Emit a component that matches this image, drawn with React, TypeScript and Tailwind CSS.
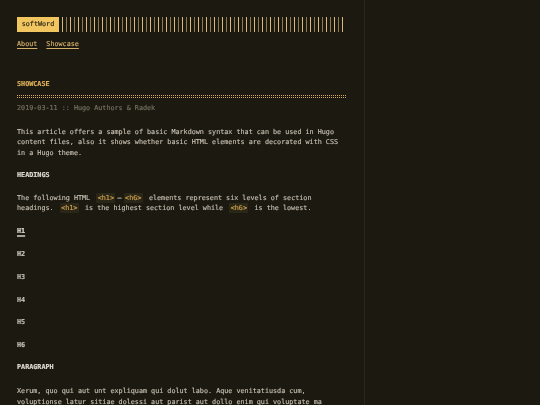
import React from "react";

const mono = { fontFamily: '"DejaVu Sans Mono", "Liberation Mono", monospace' };

function Code({ children }: { children: React.ReactNode }) {
  return (
    <code className="mx-[2px] rounded-[1px] bg-[#2b2718] px-[1.5px] py-[1px] text-[#cfa24c]" style={mono}>
      {children}
    </code>
  );
}

export default function App() {
  const bars = Array.from({ length: 71 });
  return (
    <div className="flex min-h-screen bg-[#1c1911] text-[6.75px] leading-[10.5px] text-[#c6bfb1] opacity-[0.999] will-change-transform [-webkit-text-stroke-width:0.15px]" style={mono}>
      <div className="w-[365px] shrink-0 border-r border-[#2a261c] px-[17px] pt-[17px] pb-[20px]">
        <header className="flex h-[15px] items-stretch">
          <div className="flex w-[42px] items-center justify-center bg-[#f1c660] text-[#2a2312]">softWord</div>
          <div className="ml-[3px] flex items-stretch gap-[3px]">
            {bars.map((_, i) => (
              <div key={i} className={i % 2 === 0 ? "w-[1px] bg-[#d6bb78]" : "w-[1px] bg-[#8f7c4e]"} />
            ))}
          </div>
        </header>
        <nav className="mt-[7px] flex gap-[9px] text-[#d3b06a]">
          <a className="underline underline-offset-[1.5px]">About</a>
          <a className="underline underline-offset-[1.5px]">Showcase</a>
        </nav>
        <main className="w-[330px]">
          <h1 className="mt-[29.5px] font-bold text-[#e3b45a]">SHOWCASE</h1>
          <div
            className="mt-[5.5px] h-[3px] w-[330px]"
            style={{
              backgroundImage:
                "repeating-linear-gradient(90deg, #d2a853 0 1px, transparent 1px 2px)",
              WebkitMaskImage:
                "linear-gradient(180deg, #000 0 1px, transparent 1px 2px, #000 2px 3px)",
            }}
          />
          <div className="mt-[4.75px] text-[#787162]">2019-03-11 :: Hugo Authors &amp; Radek</div>
          <p className="mt-[13.5px]">
            This article offers a sample of basic Markdown syntax that can be used in Hugo content files, also it shows whether basic HTML elements are decorated with CSS in a Hugo theme.
          </p>
          <h2 className="mt-[11.5px] font-bold text-[#e0dbd1]">HEADINGS</h2>
          <p className="mt-[12.5px]">
            The following HTML <Code>&lt;h1&gt;</Code>—<Code>&lt;h6&gt;</Code> elements represent six levels of section headings. <Code>&lt;h1&gt;</Code> is the highest section level while <Code>&lt;h6&gt;</Code> is the lowest.
          </p>
          <div className="mt-[12.5px] font-bold text-[#e0dbd1] underline decoration-[#a8a294] decoration-[1.5px] underline-offset-[2px]">H1</div>
          <div className="mt-[12.25px] font-bold text-[#d2ccc0]">H2</div>
          <div className="mt-[12.25px] font-bold text-[#c2bcb0]">H3</div>
          <div className="mt-[12.25px] font-bold text-[#c2bcb0]">H4</div>
          <div className="mt-[12.25px] font-bold text-[#c2bcb0]">H5</div>
          <div className="mt-[12.25px] font-bold text-[#c8c2b6]">H6</div>
          <h2 className="mt-[11.5px] font-bold text-[#e0dbd1]">PARAGRAPH</h2>
          <p className="mt-[13.5px]">
            Xerum, quo qui aut unt expliquam qui dolut labo. Aque venitatiusda cum, voluptionse latur sitiae dolessi aut parist aut dollo enim qui voluptate ma dolestendit peritin re plis aut quas inctum laceat est volestemque commosa as cus endigna tectur, offic to cor sequas etum rerum idem sintibus eiur?
          </p>
        </main>
      </div>
      <div className="flex-1" />
    </div>
  );
}
